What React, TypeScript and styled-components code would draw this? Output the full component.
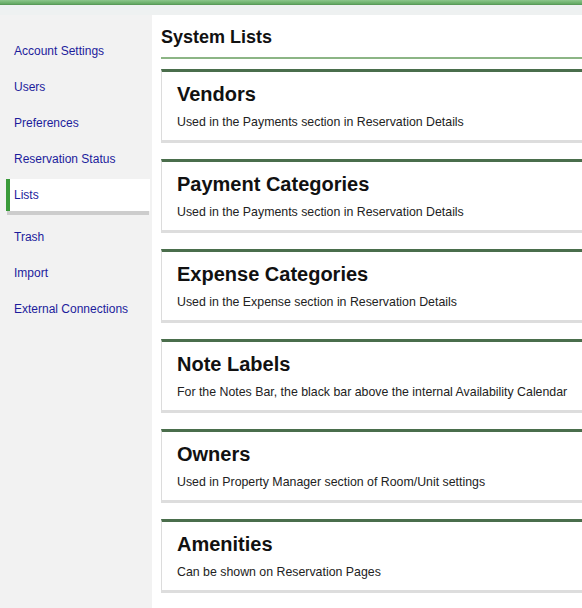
import React from "react";
import styled, { createGlobalStyle } from "styled-components";

interface NavItemProps {
  active?: boolean;
}

interface ListType {
  title: string;
  description: string;
}

const navItems = [
  "Account Settings",
  "Users",
  "Preferences",
  "Reservation Status",
  "Lists",
  "Trash",
  "Import",
  "External Connections",
];

const lists: ListType[] = [
  { title: "Vendors", description: "Used in the Payments section in Reservation Details" },
  { title: "Payment Categories", description: "Used in the Payments section in Reservation Details" },
  { title: "Expense Categories", description: "Used in the Expense section in Reservation Details" },
  {
    title: "Note Labels",
    description: "For the Notes Bar, the black bar above the internal Availability Calendar",
  },
  { title: "Owners", description: "Used in Property Manager section of Room/Unit settings" },
  { title: "Amenities", description: "Can be shown on Reservation Pages" },
];

const App: React.FC = () => {
  return (
    <>
      <GlobalStyle />
      <TopBar />
      <Body>
        <Sidebar>
          {navItems.map((item) => (
            <NavItem key={item} href="#" active={item === "Lists"}>
              {item}
            </NavItem>
          ))}
        </Sidebar>
        <Main>
          <Heading>System Lists</Heading>
          <HeadingRule />
          {lists.map((list) => (
            <Card key={list.title}>
              <CardTitle>{list.title}</CardTitle>
              <CardText>{list.description}</CardText>
            </Card>
          ))}
        </Main>
      </Body>
    </>
  );
};

export default App;

const GlobalStyle = createGlobalStyle`
  html, body {
    margin: 0;
    padding: 0;
    background: #eef1f1;
    overflow: hidden;
  }
  body {
    font-family: "Liberation Sans", Arial, sans-serif;
  }
`;

const TopBar = styled.div`
  height: 5px;
  background: linear-gradient(#8cc68c, #62a862);
  border-bottom: 1px solid #5a9a5a;
  box-sizing: border-box;
`;

const Body = styled.div`
  display: flex;
  padding-top: 10px;
  min-height: 603px;
  box-sizing: border-box;
`;

const Sidebar = styled.nav`
  width: 152px;
  flex-shrink: 0;
  background: #f2f2f2;
  padding-top: 20px;
  display: flex;
  flex-direction: column;
  gap: 4px;
`;

const NavItem = styled.a.withConfig({
  shouldForwardProp: (prop) => prop !== "active",
})<NavItemProps>`
  display: block;
  height: 32px;
  line-height: 32px;
  font-size: 12px;
  color: #1c1c9c;
  text-decoration: none;
  padding-left: 14px;
  ${({ active }) =>
    active &&
    `
    margin-left: 6px;
    margin-right: 2px;
    padding-left: 4px;
    background: #ffffff;
    border-left: 4px solid #3a9a3a;
    box-shadow: 0 5px 0 -1px #cdcdcd;
    margin-bottom: 6px;
  `}
`;

const Main = styled.main`
  flex: 1;
  background: #ffffff;
  padding: 11px 0 0 9px;
  overflow: hidden;
`;

const Heading = styled.h1`
  margin: 0;
  font-size: 18px;
  line-height: 22px;
  font-weight: bold;
  color: #111111;
`;

const HeadingRule = styled.div`
  height: 2px;
  margin-top: 9px;
  margin-bottom: 10px;
  background: #8cb585;
`;

const Card = styled.section`
  width: 440px;
  background: #ffffff;
  border-top: 3px solid #4a6e4c;
  border-left: 1px solid #dcdcdc;
  box-shadow: 0 3px 0 #dddddd;
  padding: 10px 16px 10px 15px;
  margin-bottom: 19px;
`;

const CardTitle = styled.h2`
  margin: 0;
  font-size: 20px;
  line-height: 24px;
  font-weight: bold;
  color: #111111;
`;

const CardText = styled.p`
  margin: 8px 0 0;
  font-size: 12.35px;
  line-height: 16px;
  color: #222222;
  white-space: nowrap;
`;
